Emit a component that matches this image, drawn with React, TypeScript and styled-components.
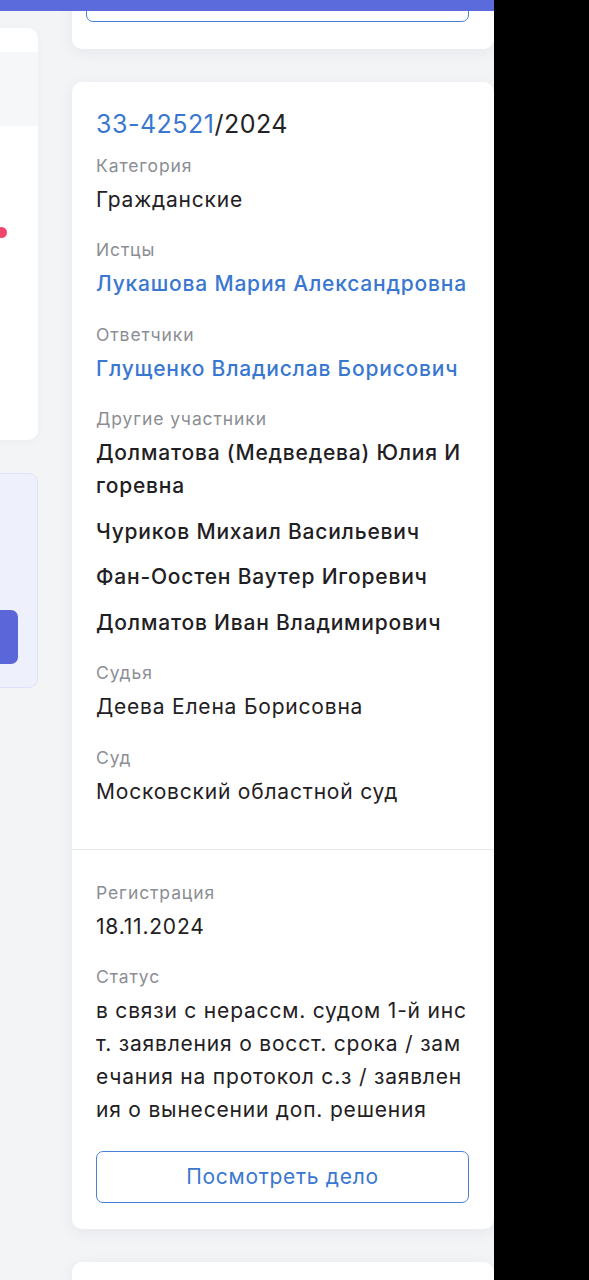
import React from "react";
import styled, { createGlobalStyle } from "styled-components";

const Global = createGlobalStyle`
  html, body { margin: 0; padding: 0; background: #000; }
  body { font-family: Inter, "Noto Sans", "Liberation Sans", sans-serif; -webkit-font-smoothing: antialiased; }
  * { box-sizing: border-box; }
`;

const Screen = styled.div`
  display: flex;
  width: 589px;
  height: 1280px;
  overflow: hidden;
`;

const Viewport = styled.div`
  width: 494px;
  flex: none;
  display: flex;
  flex-direction: column;
  background: #f3f4f6;
  overflow: hidden;
`;

const BlackSide = styled.div`
  flex: 1;
  background: #000;
`;

const TopBar = styled.div`
  height: 11px;
  flex: none;
  background: #5c6bdc;
`;

const Content = styled.div`
  flex: 1;
  display: flex;
  gap: 34px;
  overflow: hidden;
  align-items: flex-start;
`;

const LeftCol = styled.div`
  width: 300px;
  flex: none;
  margin-left: -262px;
  padding-top: 17px;
  display: flex;
  flex-direction: column;
  gap: 33px;
`;

const LeftCard = styled.div`
  height: 412px;
  background: #fff;
  border-radius: 10px;
  overflow: hidden;
  display: flex;
  flex-direction: column;
  box-shadow: 0 2px 10px rgba(0, 0, 0, 0.03);
`;

const LeftHead = styled.div`
  height: 24px;
`;

const LeftBand = styled.div`
  height: 74px;
  background: #f6f7f9;
`;

const DotRow = styled.div`
  display: flex;
  justify-content: flex-end;
  padding: 101px 31px 0 0;
`;

const Dot = styled.span`
  width: 11px;
  height: 11px;
  border-radius: 50%;
  background: #f1466b;
`;

const PromoBox = styled.div`
  height: 215px;
  background: #eef0fc;
  border: 1px solid #dfe3f7;
  border-radius: 9px;
  display: flex;
  flex-direction: column;
  justify-content: flex-end;
  align-items: flex-end;
  padding: 0 19px 23px 0;
`;

const PromoButton = styled.div`
  width: 240px;
  height: 54px;
  border-radius: 7px;
  background: #5b66d8;
`;

const MainCol = styled.div`
  width: 422px;
  flex: none;
  display: flex;
  flex-direction: column;
  gap: 33px;
`;

const Card = styled.div<{ $cut?: boolean }>`
  background: #fff;
  border-radius: 10px;
  box-shadow: 0 3px 16px rgba(20, 30, 60, 0.06);
  display: flex;
  flex-direction: column;
  margin-top: ${(p) => (p.$cut ? "-41px" : "0")};
`;

const TopCardBody = styled.div`
  padding: 0 25px 25px 14px;
`;

const Section = styled.div<{ $top: number; $bottom: number; $divider?: boolean }>`
  padding: ${(p) => p.$top}px 25px ${(p) => p.$bottom}px 24px;
  border-top: ${(p) => (p.$divider ? "1px solid #e7e8eb" : "none")};
  display: flex;
  flex-direction: column;
`;

const Title = styled.div`
  font-size: 25px;
  line-height: 36px;
  color: #222326;
  letter-spacing: 0.5px;
  margin-bottom: 12.5px;
`;

const TitleLink = styled.span`
  color: #3a77d1;
`;

const FieldList = styled.div`
  display: flex;
  flex-direction: column;
  gap: 23.5px;
`;

const Field = styled.div`
  display: flex;
  flex-direction: column;
`;

const Label = styled.div`
  font-size: 17.5px;
  line-height: 22px;
  color: #8b8e94;
  letter-spacing: 0.9px;
`;

const Values = styled.div`
  display: flex;
  flex-direction: column;
  gap: 12.5px;
  margin-top: 6px;
`;

const Value = styled.div<{ $link?: boolean; $weight?: number; $breakAll?: boolean }>`
  font-size: 21px;
  line-height: 33px;
  letter-spacing: 0.8px;
  color: ${(p) => (p.$link ? "#3a77d1" : "#1f2023")};
  font-weight: ${(p) => p.$weight ?? 400};
  word-break: ${(p) => (p.$breakAll ? "break-all" : "normal")};
`;

const OutlineButton = styled.button`
  height: 52px;
  width: 100%;
  border: 1.5px solid #4a82d9;
  border-radius: 7px;
  background: #fff;
  color: #3a77d1;
  font-family: inherit;
  font-size: 21px;
  letter-spacing: 0.7px;
  margin-top: 24.5px;
  cursor: pointer;
`;

const TopButton = styled(OutlineButton)`
  margin-top: 0;
  width: 383px;
`;

const NextCard = styled(Card)`
  height: 120px;
`;

type F = { label: string; values: string[]; link?: boolean; weight?: number; breakAll?: boolean };

const upper: F[] = [
  { label: "Категория", values: ["Гражданские"] },
  { label: "Истцы", values: ["Лукашова Мария Александровна"], link: true, weight: 500 },
  { label: "Ответчики", values: ["Глущенко Владислав Борисович"], link: true, weight: 500 },
  {
    label: "Другие участники",
    values: [
      "Долматова (Медведева) Юлия Игоревна",
      "Чуриков Михаил Васильевич",
      "Фан-Оостен Ваутер Игоревич",
      "Долматов Иван Владимирович",
    ],
    weight: 500,
    breakAll: true,
  },
  { label: "Судья", values: ["Деева Елена Борисовна"] },
  { label: "Суд", values: ["Московский областной суд"] },
];

const lower: F[] = [
  { label: "Регистрация", values: ["18.11.2024"] },
  {
    label: "Статус",
    values: [
      "в связи с нерассм. судом 1-й инст. заявления о восст. срока / замечания на протокол с.з / заявления о вынесении доп. решения",
    ],
    breakAll: true,
  },
];

const Fields = ({ items }: { items: F[] }) => (
  <FieldList>
    {items.map((f) => (
      <Field key={f.label}>
        <Label>{f.label}</Label>
        <Values>
          {f.values.map((v) => (
            <Value key={v} $link={f.link} $weight={f.weight} $breakAll={f.breakAll}>
              {v}
            </Value>
          ))}
        </Values>
      </Field>
    ))}
  </FieldList>
);

export default function App() {
  return (
    <>
      <Global />
      <Screen>
        <Viewport>
          <TopBar />
          <Content>
            <LeftCol>
              <LeftCard>
                <LeftHead />
                <LeftBand />
                <DotRow>
                  <Dot />
                </DotRow>
              </LeftCard>
              <PromoBox>
                <PromoButton />
              </PromoBox>
            </LeftCol>
            <MainCol>
              <Card $cut>
                <TopCardBody>
                  <TopButton aria-label="Посмотреть дело" />
                </TopCardBody>
              </Card>
              <Card>
                <Section $top={24} $bottom={41}>
                  <Title>
                    <TitleLink>33-42521</TitleLink>/2024
                  </Title>
                  <Fields items={upper} />
                </Section>
                <Section $top={32} $bottom={26} $divider>
                  <Fields items={lower} />
                  <OutlineButton>Посмотреть дело</OutlineButton>
                </Section>
              </Card>
              <NextCard />
            </MainCol>
          </Content>
        </Viewport>
        <BlackSide />
      </Screen>
    </>
  );
}
